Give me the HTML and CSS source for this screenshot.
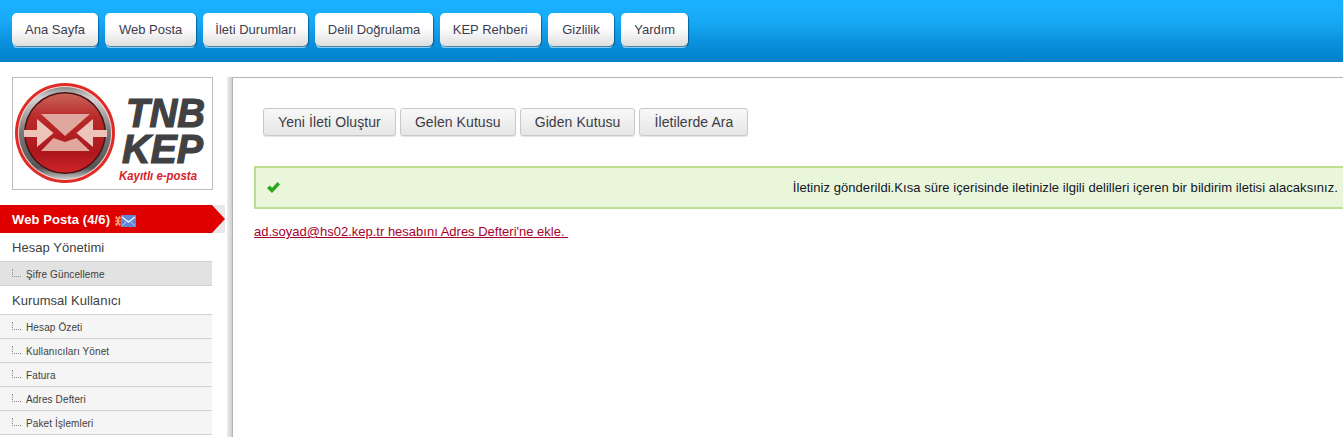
FILE: index.html
```html
<!DOCTYPE html>
<html lang="tr">
<head>
<meta charset="utf-8">
<title>TNB KEP</title>
<link rel="stylesheet" href="styles.css">
</head>
<body>
<header class="topbar">
  <nav class="topnav">
    <a class="topbtn">Ana Sayfa</a>
    <a class="topbtn topbtn-wide">Web Posta</a>
    <a class="topbtn topbtn-tight">İleti Durumları</a>
    <a class="topbtn topbtn-snug">Delil Doğrulama</a>
    <a class="topbtn">KEP Rehberi</a>
    <a class="topbtn topbtn-wider">Gizlilik</a>
    <a class="topbtn">Yardım</a>
  </nav>
</header>
<div class="layout">
  <aside class="sidebar">
    <div class="logo">
      <svg width="199" height="111" viewBox="0 0 199 111">
        <defs>
          <linearGradient id="disc" x1="0" y1="0" x2="0" y2="1">
            <stop offset="0" stop-color="#c9655a"/>
            <stop offset=".3" stop-color="#b92a2a"/>
            <stop offset=".75" stop-color="#ad171c"/>
            <stop offset="1" stop-color="#cf2428"/>
          </linearGradient>
          <linearGradient id="ring" x1="0" y1="0" x2="0" y2="1">
            <stop offset="0" stop-color="#8a8a8a"/>
            <stop offset=".12" stop-color="#d4d4d4"/>
            <stop offset=".5" stop-color="#777"/>
            <stop offset=".88" stop-color="#555"/>
            <stop offset="1" stop-color="#c8c8c8"/>
          </linearGradient>
        </defs>
        <circle cx="52" cy="55" r="50" fill="#e12a26"/>
        <circle cx="52" cy="55" r="47" fill="#f4d8d4"/>
        <circle cx="52" cy="55" r="46" fill="url(#ring)"/>
        <circle cx="52" cy="55" r="41" fill="#4a1214"/>
        <circle cx="52" cy="55" r="39.500" fill="url(#disc)"/>
        <path d="M28 36H77L52 58Z" fill="#dfa79d"/>
        <path d="M28 73H77L63.500 60 52 64 40.500 60Z" fill="#dfa79d"/>
        <path d="M11 52H24V41L40.500 55 24 69V59H11Z" fill="#ecc4ba"/>
        <path d="M94 52H80V41L63.500 55 80 69V59H94Z" fill="#ecc4ba"/>
        <text class="logo-big" x="113" y="49" textLength="79" lengthAdjust="spacingAndGlyphs">TNB</text>
        <text class="logo-big" x="109" y="85" textLength="81" lengthAdjust="spacingAndGlyphs">KEP</text>
        <text class="logo-small" x="106" y="102" textLength="78" lengthAdjust="spacingAndGlyphs">Kayıtlı e-posta</text>
      </svg>
    </div>
    <div class="menu">
      <div class="menu-active">
        <span class="menu-active-label">Web Posta (4/6)</span>
        <svg class="mail-badge" width="21" height="12" viewBox="0 0 21 12">
          <path d="M0 3h6M0 6h6M0 9h6M1 1l4 10M5 1 1 11" stroke="#f8bb8c" stroke-width="1" fill="none"/>
          <rect x="6" y="0" width="15" height="12" fill="#5f86d8"/>
          <path d="M7 2l6.500 5L20 2" stroke="#eef4fd" stroke-width="1.500" fill="none"/>
          <path d="M7 11l4-4M20 11l-4-4" stroke="#b9cdf2" stroke-width="1" fill="none"/>
        </svg>
      </div>
      <div class="menu-head">Hesap Yönetimi</div>
      <div class="menu-item menu-item-current"><span class="tree"></span><span class="item-label">Şifre Güncelleme</span></div>
      <div class="menu-head">Kurumsal Kullanıcı</div>
      <div class="menu-item"><span class="tree"></span><span class="item-label">Hesap Özeti</span></div>
      <div class="menu-item"><span class="tree"></span><span class="item-label">Kullanıcıları Yönet</span></div>
      <div class="menu-item"><span class="tree"></span><span class="item-label">Fatura</span></div>
      <div class="menu-item"><span class="tree"></span><span class="item-label">Adres Defteri</span></div>
      <div class="menu-item"><span class="tree"></span><span class="item-label">Paket İşlemleri</span></div>
    </div>
  </aside>
  <div class="rail"></div>
  <main class="content">
    <div class="actions">
      <a class="actbtn">Yeni İleti Oluştur</a>
      <a class="actbtn">Gelen Kutusu</a>
      <a class="actbtn">Giden Kutusu</a>
      <a class="actbtn">İletilerde Ara</a>
    </div>
    <div class="alert">
      <svg class="check" width="13" height="11" viewBox="0 0 13 11"><path d="M0 6 3 3.500 5 6 10.500 0 13 2.500 5 11Z" fill="#2aa81c"/></svg>
      <span class="alert-text">İletiniz gönderildi.Kısa süre içerisinde iletinizle ilgili delilleri içeren bir bildirim iletisi alacaksınız.</span>
    </div>
    <a class="addlink">ad.soyad@hs02.kep.tr hesabını Adres Defteri'ne ekle.&nbsp;</a>
  </main>
</div>
</body>
</html>
```
FILE: styles.css
```css
html, body {
  margin: 0;
  padding: 0;
  height: 437px;
  overflow: hidden;
  background: #fff;
  font-family: "Liberation Sans", Arial, sans-serif;
}
.topbar {
  height: 62px;
  box-sizing: border-box;
  padding: 13px 0 0 12px;
  background: linear-gradient(#1ab2ff, #18acf8 30%, #0a90dc 70%, #0080c8);
}
.topnav {
  display: flex;
  gap: 7px;
}
.topbtn {
  display: block;
  height: 33px;
  line-height: 34px;
  padding: 0 13px;
  font-size: 13px;
  color: #3c3c4e;
  border-radius: 5px;
  background: linear-gradient(#fff, #fff 45%, #dedede);
  box-shadow: 1px 1px 1px rgba(0, 50, 90, .55), 0 3px 0 -1px #8fd4f6;
}
.topbtn-wide {
  padding: 0 14px;
}
.topbtn-tight {
  padding: 0 12px;
}
.topbtn-snug {
  padding: 0 12.5px;
}
.topbtn-wider {
  padding: 0 14.5px;
}
.layout {
  display: flex;
  padding-top: 15px;
}
.sidebar {
  width: 227px;
  flex: none;
}
.logo {
  width: 199px;
  height: 111px;
  margin-left: 12px;
  border: 1px solid #bdbdbd;
  line-height: 0;
}
.logo-big {
  font-family: "Liberation Sans", sans-serif;
  font-weight: 700;
  font-style: italic;
  font-size: 40px;
  fill: #414042;
  stroke: #414042;
  stroke-width: 1.2;
}
.logo-small {
  font-family: "Liberation Sans", sans-serif;
  font-weight: 700;
  font-style: italic;
  font-size: 12px;
  fill: #d8232a;
}
.menu {
  margin-top: 15px;
  width: 212px;
}
.menu-active {
  position: relative;
  display: flex;
  align-items: center;
  height: 28px;
  padding-left: 12px;
  color: #fff;
  font-size: 13px;
  font-weight: 700;
  letter-spacing: .1px;
  background: #e00000;
}
.menu-active::before {
  content: "";
  position: absolute;
  left: 212px;
  top: 0;
  width: 13px;
  height: 28px;
  background: #e8e8e8;
}
.menu-active::after {
  content: "";
  position: absolute;
  left: 212px;
  top: 0;
  border-left: 13px solid #e00000;
  border-top: 14px solid transparent;
  border-bottom: 14px solid transparent;
}
.menu-active-label {
  margin-right: 5px;
}
.mail-badge {
  margin-top: 3px;
}
.menu-head {
  height: 28px;
  line-height: 29px;
  padding-left: 12px;
  font-size: 13px;
  letter-spacing: .05px;
  color: #404040;
  background: #fff;
  border-bottom: 1px solid #d0d0d0;
}
.menu-item {
  display: flex;
  align-items: center;
  height: 23px;
  padding-left: 12px;
  font-size: 10px;
  letter-spacing: .12px;
  color: #404040;
  background: #f5f5f5;
  border-bottom: 1px solid #d0d0d0;
}
.menu-item-current {
  background: #e2e2e2;
}
.item-label {
  padding-top: 2px;
}
.tree {
  width: 9px;
  height: 8px;
  margin-right: 5px;
  margin-top: -1px;
  border-left: 1px dotted #909090;
  border-bottom: 1px dotted #909090;
  box-sizing: border-box;
}
.rail {
  width: 5px;
  flex: none;
  height: 360px;
  background: linear-gradient(90deg, #ececec, #dcdcdc 60%, #cfcfcf);
}
.content {
  flex: 1;
  min-width: 0;
  height: 360px;
  box-sizing: border-box;
  border-left: 1px solid #b4b4b4;
  border-top: 1px solid #b4b4b4;
  padding: 30px 0 0 21px;
}
.actions {
  display: flex;
  gap: 4px;
  padding-left: 9px;
}
.actbtn {
  display: block;
  height: 26px;
  line-height: 27px;
  padding: 0 14px;
  font-size: 14px;
  letter-spacing: .08px;
  color: #3c3c46;
  border: 1px solid #c8c8c8;
  border-radius: 3px;
  background: linear-gradient(#f8f8f8, #e6e6e6);
  box-shadow: 0 1px 1px #e4e4e4;
}
.alert {
  display: flex;
  align-items: center;
  justify-content: space-between;
  height: 43px;
  box-sizing: border-box;
  margin-top: 30px;
  margin-right: -5px;
  padding: 0 10px 0 11px;
  background: #e9f6d9;
  border: 2px solid #bddf8f;
  border-right: 0;
  font-size: 13px;
  letter-spacing: .05px;
  color: #14142a;
}
.addlink {
  display: inline-block;
  margin-top: 15px;
  font-size: 13px;
  color: #a8002a;
  text-decoration: underline;
}
```
